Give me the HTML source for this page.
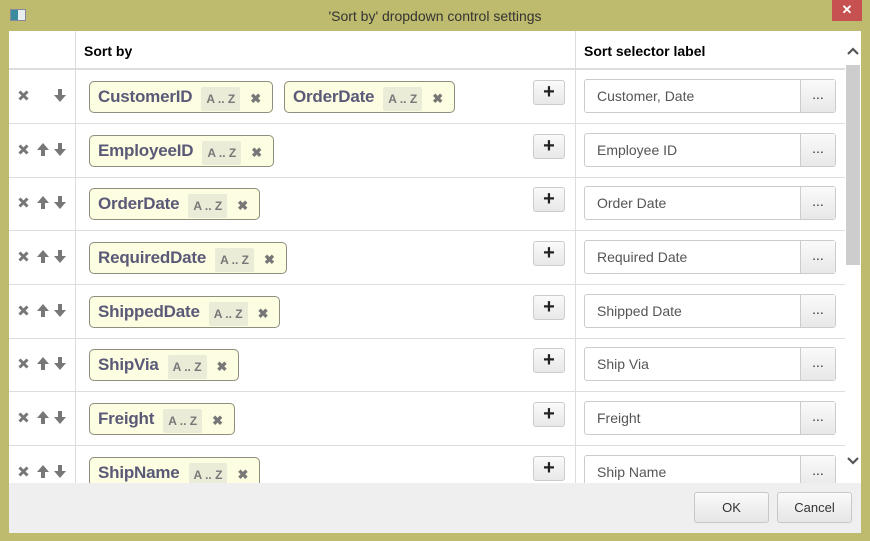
<!DOCTYPE html>
<html><head><style>
*{box-sizing:border-box;margin:0;padding:0}
body{width:870px;height:541px;background:#bfbb6e;font-family:"Liberation Sans",sans-serif;position:relative;overflow:hidden}
.title{position:absolute;top:0;left:0;width:870px;height:31px;text-align:center;line-height:32px;font-size:14px;color:#333}
.close{position:absolute;left:832px;top:0;width:30px;height:21px;background:#c75050;color:#fff;text-align:center;line-height:20px;font-size:13px;font-weight:bold}
.icon{position:absolute;left:10px;top:9px;width:16px;height:12px;border:1px solid #889;background:linear-gradient(90deg,#3a8aa0 0 50%,#e8eef0 50%)}
.win{position:absolute;left:9px;top:31px;width:852px;height:502px;background:#fff;overflow:hidden}
.hdr{position:absolute;top:0;left:0;width:836px;height:39px;border-bottom:2px solid #ddd;font-weight:bold;font-size:14px}
.vl{position:absolute;top:0;width:1px;height:452px;background:#ddd}
.row{position:absolute;left:0;width:836px;height:54px;border-bottom:1px solid #ddd}
.ctl{position:absolute;left:8px;top:19px}
.chips{position:absolute;left:80px;top:11px;display:flex;gap:11px}
.chip{height:32px;border:1px solid #8e8e7c;border-radius:5px;background:#fdfde1;display:flex;align-items:center;padding:0 11px 0 8px;font-weight:bold;font-size:17px;color:#5a5a78;letter-spacing:-0.2px}
.az{background:#ebecd8;color:#777;font-size:12px;padding:5px 5px;margin:0 10px 0 9px;margin-top:4px;border-radius:2px;letter-spacing:0}
.x{color:#777;font-size:13px;margin-top:3px}
.plus{position:absolute;left:524px;top:10px;width:32px;height:25px;border:1px solid #ccc;border-radius:3px;background:linear-gradient(#fafafa,#e8e8e8);text-align:center;font-weight:bold;font-size:20px;line-height:22px;color:#222}
.inp{position:absolute;left:575px;top:9px;width:252px;height:34px;border:1px solid #ccc;border-radius:3px;font-size:14px;color:#555;line-height:32px;padding-left:12px}
.dots{position:absolute;right:0;top:0;width:35px;height:32px;border-left:1px solid #ccc;background:linear-gradient(#fafafa,#e8e8e8);text-align:center;line-height:28px;color:#333}
.sb{position:absolute;left:836px;top:0;width:16px;height:452px;background:#fff}
.thumb{position:absolute;left:837px;top:34px;width:14px;height:200px;background:#cdcdcd}
.foot{position:absolute;left:0;top:452px;width:852px;height:50px;background:#efefef}
.btn{position:absolute;top:9px;height:31px;border:1px solid #c8c8c8;border-radius:3px;background:linear-gradient(#fafafa,#e6e6e6);text-align:center;line-height:29px;font-size:13px;color:#333}
</style></head><body>
<svg width="0" height="0" style="position:absolute">
<defs>
<g id="xx"><path d="M1.5 1.5L9.5 9.5M9.5 1.5L1.5 9.5" stroke="#777" stroke-width="3"/></g>
<g id="dn"><path d="M6 0V7" stroke="#777" stroke-width="4"/><path d="M0 6L12 6L6 13Z" fill="#777"/></g>
<g id="up"><path d="M6 6V13" stroke="#777" stroke-width="4"/><path d="M0 7L12 7L6 0Z" fill="#777"/></g>
</defs></svg>
<div class="icon"></div>
<div class="title">'Sort by' dropdown control settings</div>
<div class="close">✕</div>
<div class="win">
<div class="hdr"><span style="position:absolute;left:75px;top:12px">Sort by</span><span style="position:absolute;left:575px;top:12px">Sort selector label</span></div>
<div class="vl" style="left:66px"></div><div class="vl" style="left:566px"></div>

<div class="row" style="top:39px"><svg class="ctl" width="60" height="14"><use href="#xx" x="1" y="1"/><use href="#dn" x="37" y="0"/></svg><div class="chips"><div class="chip">CustomerID<span class="az">A .. Z</span><span class="x">✖</span></div><div class="chip">OrderDate<span class="az">A .. Z</span><span class="x">✖</span></div></div><div class="plus">+</div><div class="inp">Customer, Date<div class="dots">...</div></div></div>
<div class="row" style="top:93px"><svg class="ctl" width="60" height="14"><use href="#xx" x="1" y="1"/><use href="#up" x="20" y="0"/><use href="#dn" x="37" y="0"/></svg><div class="chips"><div class="chip">EmployeeID<span class="az">A .. Z</span><span class="x">✖</span></div></div><div class="plus">+</div><div class="inp">Employee ID<div class="dots">...</div></div></div>
<div class="row" style="top:146px"><svg class="ctl" width="60" height="14"><use href="#xx" x="1" y="1"/><use href="#up" x="20" y="0"/><use href="#dn" x="37" y="0"/></svg><div class="chips"><div class="chip">OrderDate<span class="az">A .. Z</span><span class="x">✖</span></div></div><div class="plus">+</div><div class="inp">Order Date<div class="dots">...</div></div></div>
<div class="row" style="top:200px"><svg class="ctl" width="60" height="14"><use href="#xx" x="1" y="1"/><use href="#up" x="20" y="0"/><use href="#dn" x="37" y="0"/></svg><div class="chips"><div class="chip">RequiredDate<span class="az">A .. Z</span><span class="x">✖</span></div></div><div class="plus">+</div><div class="inp">Required Date<div class="dots">...</div></div></div>
<div class="row" style="top:254px"><svg class="ctl" width="60" height="14"><use href="#xx" x="1" y="1"/><use href="#up" x="20" y="0"/><use href="#dn" x="37" y="0"/></svg><div class="chips"><div class="chip">ShippedDate<span class="az">A .. Z</span><span class="x">✖</span></div></div><div class="plus">+</div><div class="inp">Shipped Date<div class="dots">...</div></div></div>
<div class="row" style="top:307px"><svg class="ctl" width="60" height="14"><use href="#xx" x="1" y="1"/><use href="#up" x="20" y="0"/><use href="#dn" x="37" y="0"/></svg><div class="chips"><div class="chip">ShipVia<span class="az">A .. Z</span><span class="x">✖</span></div></div><div class="plus">+</div><div class="inp">Ship Via<div class="dots">...</div></div></div>
<div class="row" style="top:361px"><svg class="ctl" width="60" height="14"><use href="#xx" x="1" y="1"/><use href="#up" x="20" y="0"/><use href="#dn" x="37" y="0"/></svg><div class="chips"><div class="chip">Freight<span class="az">A .. Z</span><span class="x">✖</span></div></div><div class="plus">+</div><div class="inp">Freight<div class="dots">...</div></div></div>
<div class="row" style="top:415px"><svg class="ctl" width="60" height="14"><use href="#xx" x="1" y="1"/><use href="#up" x="20" y="0"/><use href="#dn" x="37" y="0"/></svg><div class="chips"><div class="chip">ShipName<span class="az">A .. Z</span><span class="x">✖</span></div></div><div class="plus">+</div><div class="inp">Ship Name<div class="dots">...</div></div></div>

<div class="sb"></div><div class="thumb"></div>
<svg style="position:absolute;left:838px;top:16px" width="12" height="8"><path d="M1 7L6 2L11 7" stroke="#555" stroke-width="2.2" fill="none"/></svg>
<svg style="position:absolute;left:838px;top:426px" width="12" height="8"><path d="M1 1L6 6L11 1" stroke="#555" stroke-width="2.2" fill="none"/></svg>
<div class="foot"><div class="btn" style="left:685px;width:75px">OK</div><div class="btn" style="left:768px;width:75px">Cancel</div></div>
</div>
</body></html>
